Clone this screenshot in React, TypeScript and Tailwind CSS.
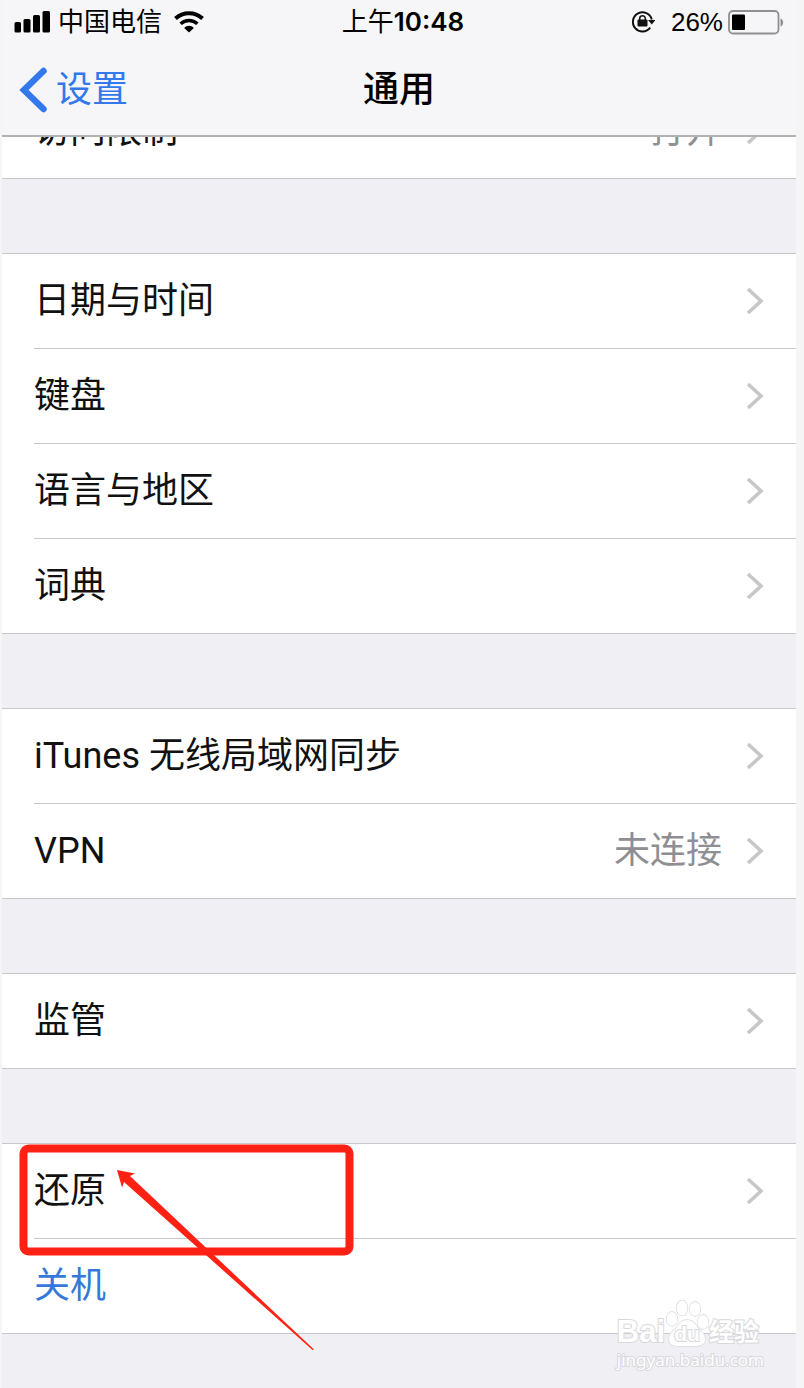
import React from "react";

type Item = { label: string; value?: string; action?: boolean };

const groups: Item[][] = [
  [{ label: "访问限制", value: "打开" }],
  [{ label: "日期与时间" }, { label: "键盘" }, { label: "语言与地区" }, { label: "词典" }],
  [{ label: "iTunes 无线局域网同步" }, { label: "VPN", value: "未连接" }],
  [{ label: "监管" }],
  [{ label: "还原" }, { label: "关机", action: true }],
];

function SignalIcon() {
  return (
    <svg width="36" height="22" viewBox="0 0 36 22" aria-hidden="true">
      <rect x="0.5" y="11" width="6.500" height="10.500" rx="1.500" />
      <rect x="9.5" y="8" width="7" height="13.500" rx="1.500" />
      <rect x="19" y="4" width="7" height="17.500" rx="1.500" />
      <rect x="28.5" y="0" width="7.500" height="21.500" rx="1.500" />
    </svg>
  );
}

function WifiIcon() {
  return (
    <svg width="30" height="22" viewBox="0 0 30 22" fill="none" stroke="#000" aria-hidden="true">
      <path d="M1.500 7.500C9 .5 21 .5 28.500 7.500" strokeWidth="4" />
      <path d="M6.600 12.800c4.800-4.500 12-4.500 16.800 0" strokeWidth="3.600" />
      <path d="M15 21.500l-4.800-4.600c2.600-2.800 7-2.800 9.600 0z" fill="#000" stroke="none" />
    </svg>
  );
}

function RotationLockIcon() {
  return (
    <svg width="24" height="24" viewBox="0 0 24 24" fill="none" stroke="#111" aria-hidden="true">
      <path d="M20.800 9.500A9.600 9.600 0 1 0 19.200 17.700" strokeWidth="2" />
      <path d="M17 10h7.500l-3.700 4.500z" fill="#111" stroke="none" />
      <rect x="6.500" y="9.500" width="10" height="7" rx="1" fill="#111" stroke="none" />
      <path d="M8.700 10V8.500a2.800 2.800 0 0 1 5.600 0V10" strokeWidth="1.600" />
    </svg>
  );
}

function BatteryIcon() {
  return (
    <svg width="57" height="25" viewBox="0 0 57 25" aria-hidden="true">
      <rect x="2" y="1" width="49.500" height="22.500" rx="4" fill="none" stroke="#8f8f8f" strokeWidth="1.800" />
      <rect x="5" y="4.500" width="13" height="15.500" rx="1" />
      <path d="M53.500 8.500c3.500 1 3.500 7 0 8z" fill="#8f8f8f" />
    </svg>
  );
}

function Chevron() {
  return (
    <svg className="shrink-0" width="18" height="28" viewBox="0 0 18 28" fill="none" aria-hidden="true">
      <path d="M2 2l13 12L2 26" stroke="#c7c7cb" strokeWidth="3.600" />
    </svg>
  );
}

function Row({ item, last }: { item: Item; last: boolean }) {
  const border = last ? "" : "border-b border-[#c8c7cc]";
  const color = item.action ? "text-[#3579d8]" : "text-[#111]";
  return (
    <li className={last ? "border-b border-[#c8c7cc] pl-8" : "pl-8"}>
      <a href="#" className={`flex items-center pr-8 ${last ? "h-[94px]" : "h-[95px]"} ${border}`}>
        <span className={`grow ${color}`}>{item.label}</span>
        {item.value && <span className="mr-6 text-[#8e8e93]">{item.value}</span>}
        {!item.action && <Chevron />}
      </a>
    </li>
  );
}

function Annotation() {
  return (
    <svg
      className="pointer-events-none absolute left-4 top-0"
      width="300"
      height="210"
      viewBox="18 1144 300 210"
      overflow="visible"
      fill="none"
      aria-hidden="true"
    >
      <rect x="23.500" y="1148.500" width="326" height="103" rx="5" stroke="#ff2113" strokeWidth="8" />
      <path d="M117 1170L135 1173.500L130 1176L314 1349.500L312.500 1350L124 1182L122 1187.500Z" fill="#ff2113" />
    </svg>
  );
}

function Watermark() {
  return (
    <div className="pointer-events-none absolute bottom-4 right-8 font-['Liberation_Sans','Noto_Sans_CJK_SC',sans-serif] text-white [-webkit-text-stroke:2px_#d8d8dc] [paint-order:stroke_fill]">
      <div className="flex h-[50px] items-end font-bold">
        <span className="text-[31px] leading-8">Bai</span>
        <span className="relative flex h-[50px] w-11 items-end justify-center">
          <svg
            className="absolute inset-0"
            width="44"
            height="50"
            viewBox="0 0 44 50"
            fill="#fff"
            stroke="#d8d8dc"
            strokeWidth="1.300"
            overflow="visible"
            aria-hidden="true"
          >
            <ellipse cx="7" cy="21" rx="5.500" ry="7" />
            <ellipse cx="17" cy="10" rx="5.500" ry="7.500" />
            <ellipse cx="30" cy="11" rx="5.500" ry="7" />
            <ellipse cx="38" cy="24" rx="5.500" ry="7" />
            <path d="M22 22c5 0 8 3 10 7 3 4 8 6 8 12 0 5-4 7-9 7H14c-6 0-10-2-10-7 0-6 5-8 8-12 2-4 5-7 10-7z" />
          </svg>
          <span className="relative text-[21px] leading-7">du</span>
        </span>
        <span className="text-[25px] leading-8">经验</span>
      </div>
      <div className="font-['Noto_Sans',sans-serif] text-[17px] leading-6">jingyan.baidu.com</div>
    </div>
  );
}

export default function App() {
  return (
    <div className="min-h-screen bg-[#f5f5f5] pl-0.5 pr-2 font-['Roboto','Noto_Sans_CJK_SC',sans-serif]">
      <div className="relative min-h-screen overflow-hidden bg-[#efeff4]">
        <header className="relative z-10 border-b-2 border-[#b2b2b2] bg-[#f6f6f8] text-black">
          <div className="grid h-11 grid-cols-[1fr_auto_1fr] items-center px-3 text-[26px] leading-9">
            <div className="flex items-center">
              <SignalIcon />
              <span className="ml-2">中国电信</span>
              <span className="ml-3"><WifiIcon /></span>
            </div>
            <time className="pl-2 font-['Inter','Noto_Sans_CJK_SC',sans-serif]">
              上午<span className="font-semibold">10:48</span>
            </time>
            <div className="flex items-center justify-end">
              <RotationLockIcon />
              <span className="ml-4 mr-1 font-['Liberation_Sans',sans-serif]">26%</span>
              <BatteryIcon />
            </div>
          </div>
          <nav className="grid h-[91px] grid-cols-[1fr_auto_1fr] items-center px-4 text-[36px] leading-[52px]">
            <a href="#" className="flex items-center gap-2 text-[#3478ed]">
              <svg width="30" height="46" viewBox="0 0 30 46" fill="none" aria-hidden="true">
                <path d="M25.500 4L6 23l19.500 19" stroke="currentColor" strokeWidth="6.500" strokeLinecap="round" />
              </svg>
              设置
            </a>
            <h1 className="font-medium">通用</h1>
          </nav>
        </header>
        <main className="-mt-[54px] flex flex-col gap-[74px] text-[36px] leading-[52px]">
          {groups.map((items, i) => (
            <section key={i} className="relative border-t border-[#c8c7cc] bg-white">
              <ul>
                {items.map((item, j) => (
                  <Row key={item.label} item={item} last={j === items.length - 1} />
                ))}
              </ul>
              {i === groups.length - 1 && <Annotation />}
            </section>
          ))}
        </main>
        <Watermark />
      </div>
    </div>
  );
}
